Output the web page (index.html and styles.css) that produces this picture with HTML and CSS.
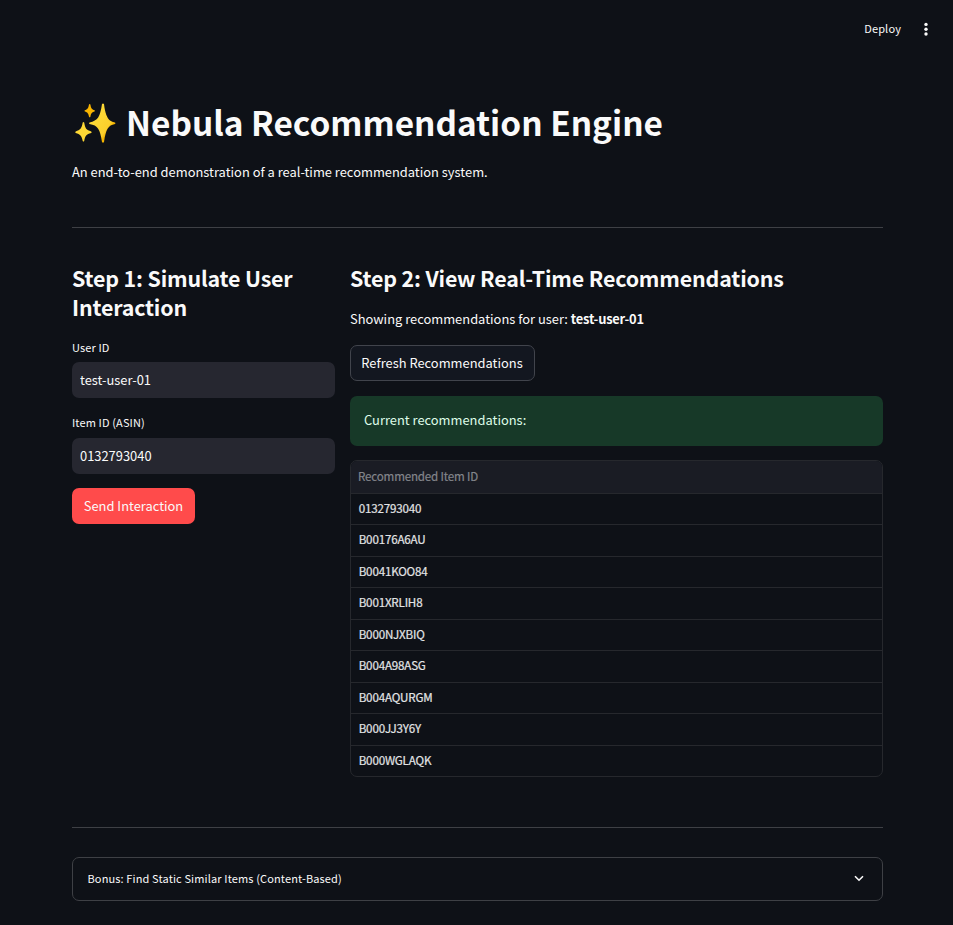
FILE: index.html
```
<!DOCTYPE html>
<html lang="en">
<head>
<meta charset="utf-8">
<title>Nebula Recommendation Engine</title>
<link rel="stylesheet" href="styles.css">
</head>
<body>
<header class="toolbar">
  <span class="deploy">Deploy</span>
  <svg class="menu" width="4" height="14" viewBox="0 0 4 14" fill="#fafafa"><circle cx="2" cy="2.4" r="1.7"/><circle cx="2" cy="7.2" r="1.7"/><circle cx="2" cy="12" r="1.7"/></svg>
</header>
<main class="page">
  <h1 class="title">
    <svg class="sparkles" width="44" height="42" viewBox="0 0 44 42">
      <defs><linearGradient id="gold" x1="0" y1="0" x2="1" y2="1"><stop offset="0.35" stop-color="#fdd835"/><stop offset="0.65" stop-color="#fbcf2c"/><stop offset="0.72" stop-color="#f4b400"/></linearGradient></defs>
      <path fill="url(#gold)" d="M29 2 Q30 1 31 2 C32 11 34 16 37 18.500 Q39 19.800 42 20.500 Q43 21.200 42 22 C35 23.500 33 27 31 40 Q30 41.500 29 40 C27 27 25 23.500 16.500 22 Q15.500 21.200 16.500 20.500 C25 18.500 27 15 29 2Z"/>
      <path fill="#fdd835" d="M9.700 20.500 Q10.400 19.500 11.200 20.500 C12.200 26.500 13.200 28 18.200 29.400 Q19.200 30 18.200 31 C13.200 32.400 12.200 33.500 11.200 39 Q10.400 40 9.700 39 C8.700 33.500 7.200 32.400 2.700 31 Q1.700 30 2.700 29.400 C7.200 28 8.700 26.500 9.700 20.500Z"/>
      <path fill="#f9b500" d="M16 2.500 Q16.700 1.500 17.400 2.500 C18 6.500 18.800 7.400 21.600 8.300 Q22.200 8.900 21.600 9.500 C18.800 10.300 18 11.300 17.400 14.800 Q16.700 15.800 16 14.800 C15.300 11.300 14.500 10.300 11.800 9.500 Q11.200 8.900 11.800 8.300 C14.500 7.400 15.300 6.500 16 2.500Z"/>
    </svg>
    <span class="title-text">Nebula Recommendation Engine</span>
  </h1>
  <p class="intro">An end-to-end demonstration of a real-time recommendation system.</p>
  <hr class="rule">
  <div class="columns">
    <section>
      <h2 class="heading">Step 1: Simulate User<br>Interaction</h2>
      <label class="label" for="user">User ID</label>
      <input class="field" id="user" value="test-user-01">
      <label class="label label-second" for="item">Item ID (ASIN)</label>
      <input class="field" id="item" value="0132793040">
      <button class="button primary">Send Interaction</button>
    </section>
    <section>
      <h2 class="heading">Step 2: View Real-Time Recommendations</h2>
      <p class="showing">Showing recommendations for user: <strong>test-user-01</strong></p>
      <button class="button secondary">Refresh Recommendations</button>
      <div class="success">Current recommendations:</div>
      <div class="table">
        <div class="table-head">Recommended Item ID</div>
        <div class="row">0132793040</div>
        <div class="row">B00176A6AU</div>
        <div class="row">B0041KOO84</div>
        <div class="row">B001XRLIH8</div>
        <div class="row">B000NJXBIQ</div>
        <div class="row">B004A98ASG</div>
        <div class="row">B004AQURGM</div>
        <div class="row">B000JJ3Y6Y</div>
        <div class="row">B000WGLAQK</div>
      </div>
    </section>
  </div>
  <hr class="rule rule-bottom">
  <div class="expander">
    <span class="expander-label">Bonus: Find Static Similar Items (Content-Based)</span>
    <svg class="chevron" width="10" height="7" viewBox="0 0 10 7" fill="none" stroke="#fafafa" stroke-width="1.6"><path d="M1 1.200 5 5.200 9 1.200"/></svg>
  </div>
</main>
</body>
</html>
```
FILE: styles.css
```
* { box-sizing: border-box; }
body {
  margin: 0;
  height: 925px;
  overflow: hidden;
  background: #0e1117;
  color: #fafafa;
  font-family: "Noto Sans CJK SC", "Noto Sans", sans-serif;
  font-size: 12.9px;
  line-height: 23px;
}
h1, h2, p { margin: 0; }
.toolbar {
  height: 58px;
  padding: 0 25px 0 0;
  display: flex;
  align-items: center;
  justify-content: flex-end;
  gap: 23px;
}
.deploy, .label, .expander-label {
  font-size: 11px;
  letter-spacing: 0.13px;
}
.deploy { padding-bottom: 1px; }
.menu { display: block; }
.page { padding: 0 70px 0 72px; }
.title {
  height: 46px;
  margin-top: 42px;
  display: flex;
  align-items: center;
  gap: 9px;
  font-size: 33.4px;
  line-height: 44px;
  font-weight: 700;
  white-space: nowrap;
}
.title-text { padding-bottom: 2px; }
.sparkles { margin-left: 1px; }
.intro { margin-top: 14px; }
.rule {
  height: 1px;
  margin: 44px 0 0;
  border: 0;
  background: #3e4045;
}
.columns {
  margin-top: 35px;
  display: grid;
  grid-template-columns: 263px 533px;
  gap: 15px;
}
.heading {
  font-size: 21.4px;
  line-height: 29px;
  font-weight: 700;
  letter-spacing: -0.16px;
  white-space: nowrap;
}
.label {
  display: block;
  margin-top: 17px;
  height: 20px;
  line-height: 19px;
}
.label-second { margin-top: 15px; }
.field {
  display: block;
  width: 100%;
  height: 36px;
  margin-top: 4px;
  padding: 0 8px 2px;
  border: 0;
  border-radius: 7px;
  background: #262730;
  color: #fafafa;
  font: inherit;
}
.label-second + .field { margin-top: 5px; }
.button {
  display: block;
  height: 36px;
  padding: 0 0 2px;
  border: 0;
  border-radius: 7px;
  color: #fafafa;
  font: inherit;
  white-space: nowrap;
}
.primary { width: 123px; margin-top: 14px; background: #ff4b4b; }
.secondary { width: 185px; margin-top: 15px; padding-right: 1px; border: 1px solid #41444c; background: #131720; }
.showing { margin-top: 15px; }
.showing strong { letter-spacing: -0.22px; }
.success {
  height: 50px;
  margin-top: 15px;
  padding: 12px 14px;
  border-radius: 7px;
  background: #173928;
  color: #dffde9;
}
.table {
  height: 317px;
  margin-top: 14px;
  border: 1px solid #26282d;
  border-radius: 7px;
  overflow: hidden;
  font-size: 11.6px;
  letter-spacing: -0.18px;
  -webkit-text-stroke: 0.2px currentColor;
}
.table-head {
  height: 31.6px;
  padding-left: 7px;
  background: #1a1c24;
  color: #83858b;
  line-height: 31px;
}
.row {
  height: 31.5px;
  padding-left: 7.7px;
  border-top: 1px solid #26282d;
  color: #e3e4e6;
  line-height: 28px;
}
.rule-bottom { margin-top: 50px; }
.expander {
  height: 44px;
  margin-top: 29px;
  padding: 0 18px 0 14.5px;
  border: 1px solid #3e4045;
  border-radius: 7px;
  display: flex;
  align-items: center;
  justify-content: space-between;
}
.expander-label { padding-bottom: 1px; }
.chevron { margin-bottom: 2px; }
```
